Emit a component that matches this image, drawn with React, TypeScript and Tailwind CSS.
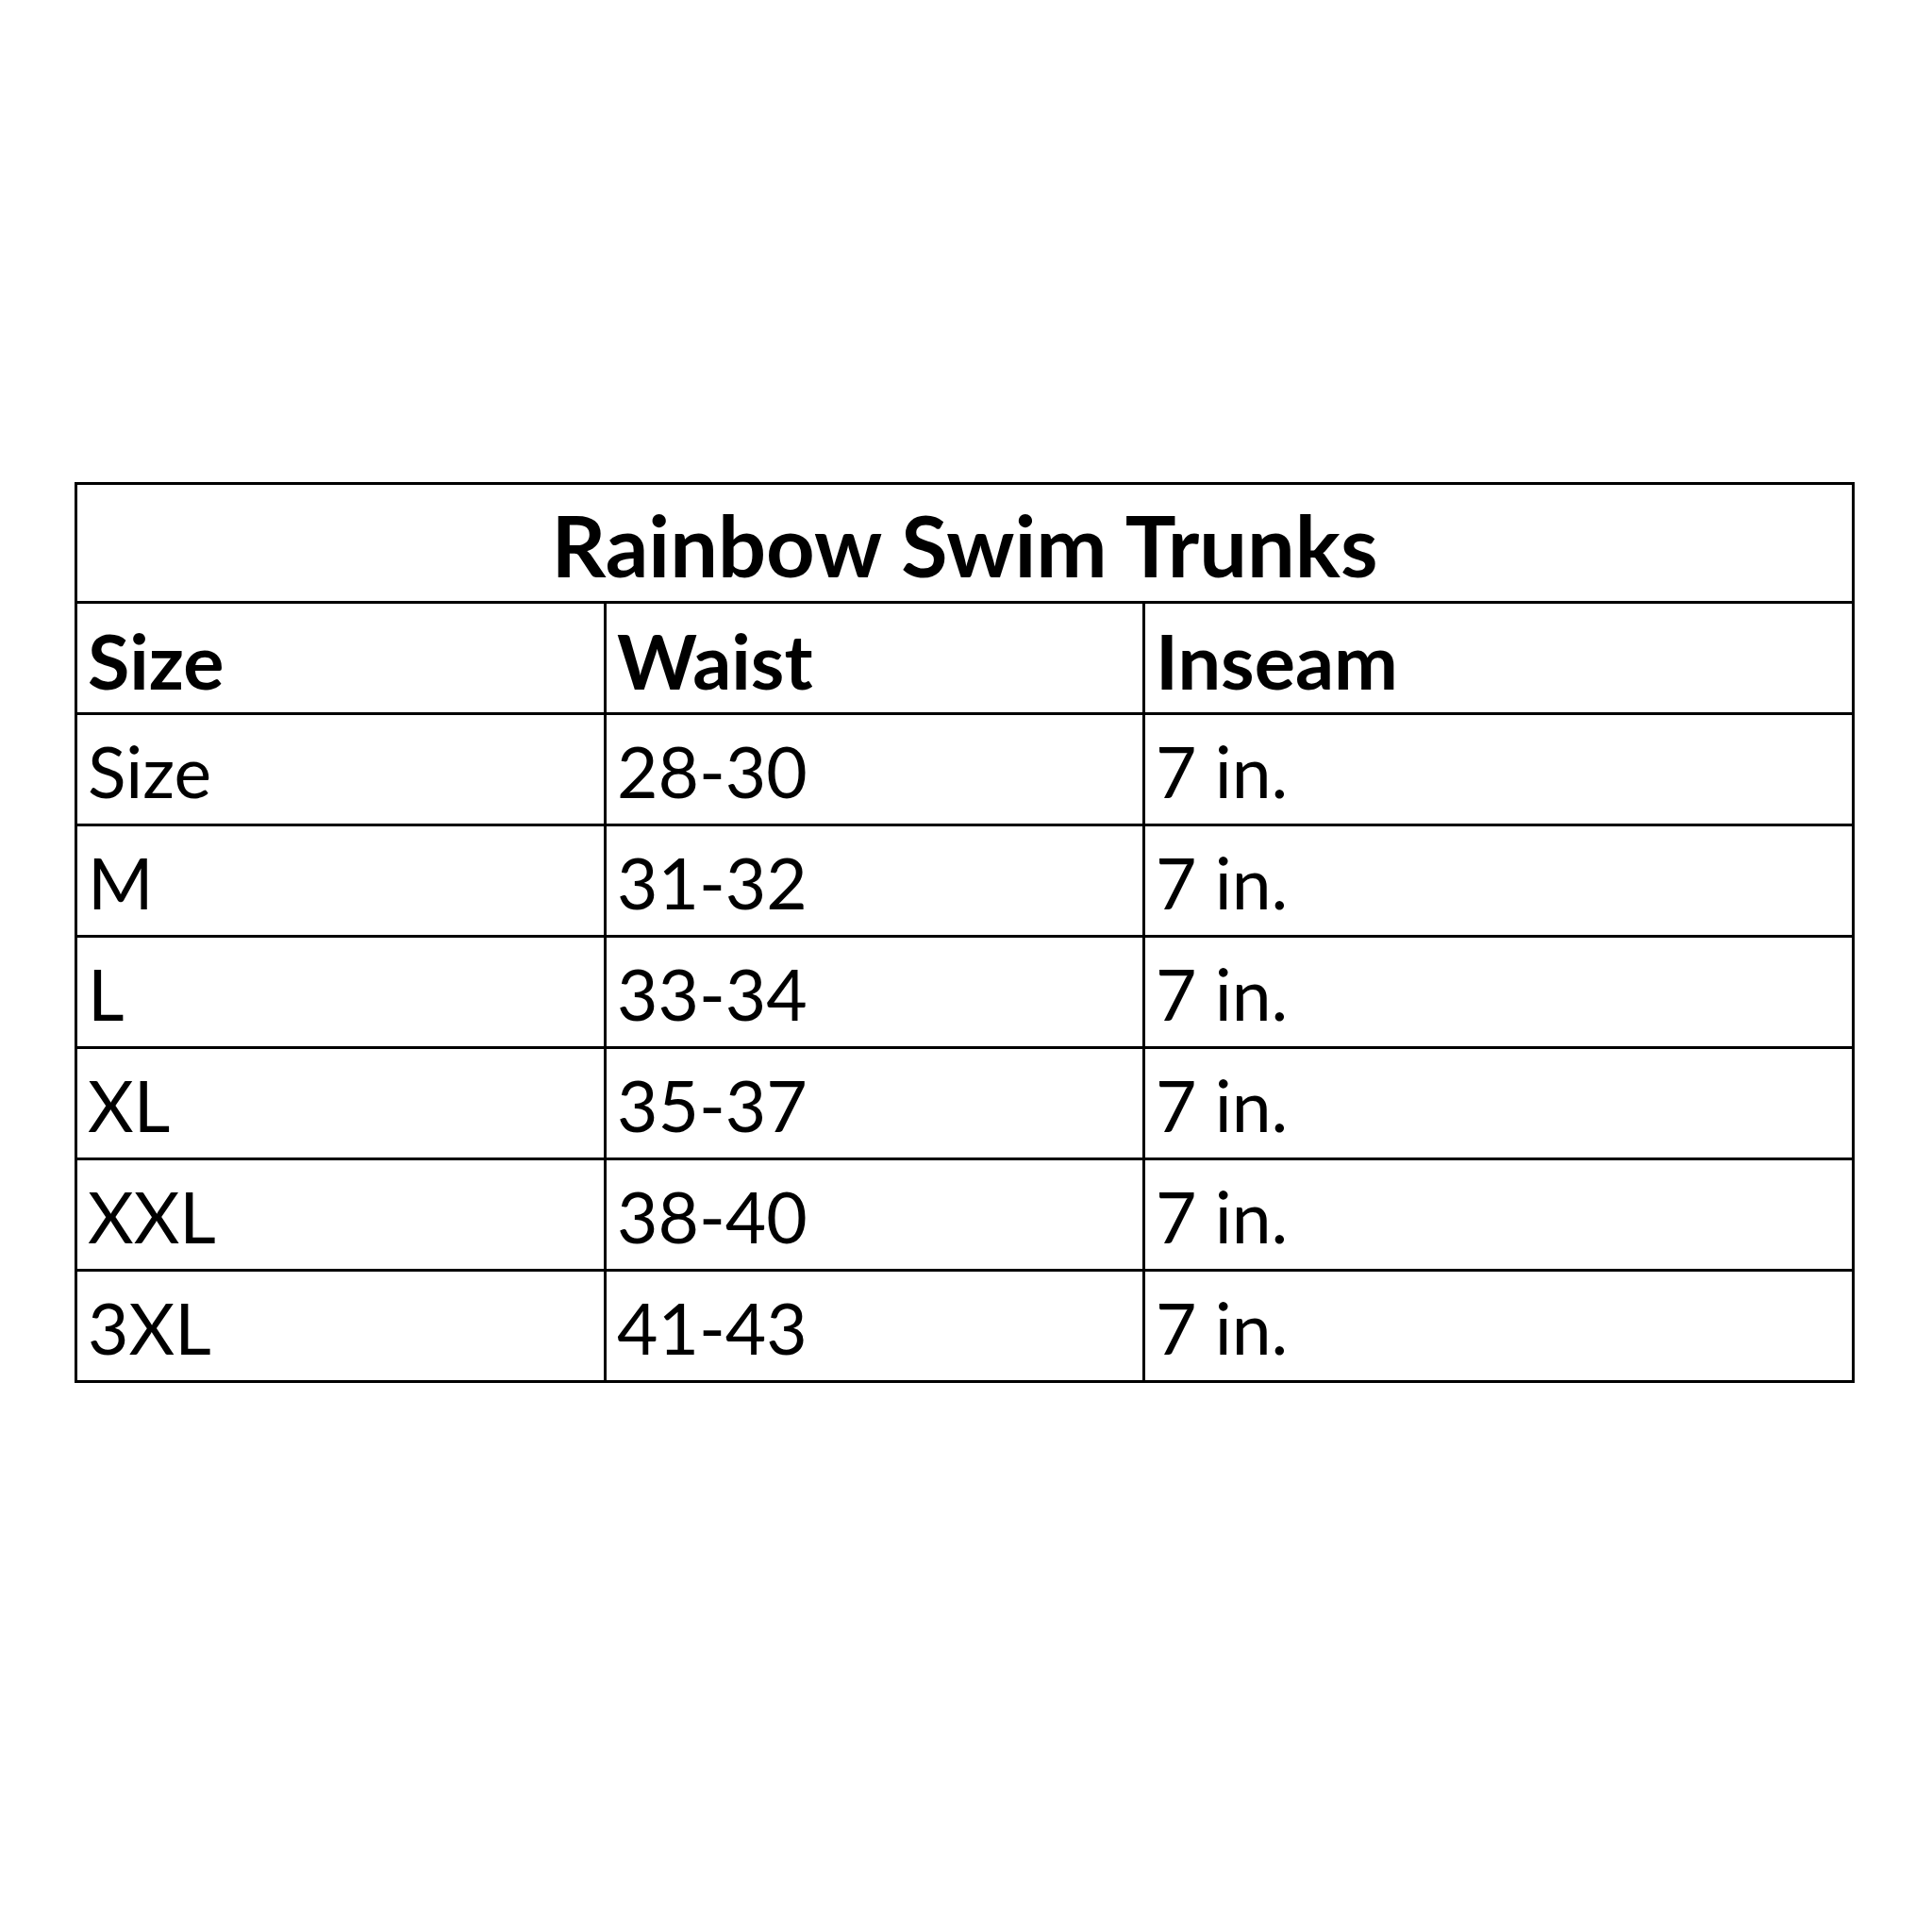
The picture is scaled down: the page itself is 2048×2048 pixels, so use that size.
import React from "react";

const rows: [string, string, string][] = [
  ["Size", "28-30", "7 in."],
  ["M", "31-32", "7 in."],
  ["L", "33-34", "7 in."],
  ["XL", "35-37", "7 in."],
  ["XXL", "38-40", "7 in."],
  ["3XL", "41-43", "7 in."],
];

export default function App() {
  return (
    <div
      className="w-[2048px] h-[2048px] bg-white pt-[511px] pl-[79px] text-black"
      style={{ fontFamily: "Lato, 'Open Sans', sans-serif" }}
    >
      <div className="w-[1887px] border-[3px] border-black">
        <div className="h-[123px] flex items-center justify-center text-[90px] font-bold pt-[2px] leading-none">
          Rainbow Swim Trunks
        </div>
        <div className="grid grid-cols-[561px_571px_1fr] border-t-[3px] border-black h-[118px] text-[81px] font-bold leading-none">
          <div className="flex items-center pl-[11px] pt-[4px] border-r-[3px] border-black">Size</div>
          <div className="flex items-center pl-[11px] pt-[4px] border-r-[3px] border-black">Waist</div>
          <div className="flex items-center pl-[11px] pt-[4px]">Inseam</div>
        </div>
        {rows.map((r, i) => (
          <div
            key={i}
            className="grid grid-cols-[561px_571px_1fr] border-t-[3px] border-black h-[118px] text-[75px] leading-none"
          >
            <div className="flex items-center pl-[11px] pt-[4px] border-r-[3px] border-black">{r[0]}</div>
            <div className="flex items-center pl-[11px] pt-[4px] border-r-[3px] border-black">{r[1]}</div>
            <div className="flex items-center pl-[11px] pt-[4px]">{r[2]}</div>
          </div>
        ))}
      </div>
    </div>
  );
}
